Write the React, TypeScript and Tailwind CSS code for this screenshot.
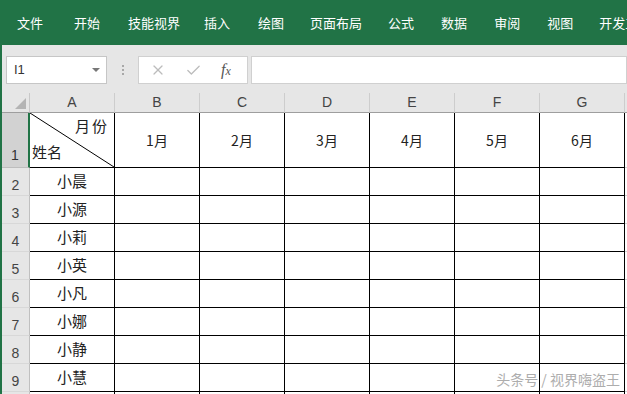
import React from "react";
import { X, Check } from "lucide-react";

const tabs: { label: string; cls: string }[] = [
  { label: "文件", cls: "ml-[17px]" },
  { label: "开始", cls: "ml-[31px]" },
  { label: "技能视界", cls: "ml-[28px]" },
  { label: "插入", cls: "ml-[24px]" },
  { label: "绘图", cls: "ml-[28px]" },
  { label: "页面布局", cls: "ml-[26px]" },
  { label: "公式", cls: "ml-[26px]" },
  { label: "数据", cls: "ml-[27px]" },
  { label: "审阅", cls: "ml-[27px]" },
  { label: "视图", cls: "ml-[27px]" },
  { label: "开发工", cls: "ml-[26px]" },
];

const cols = ["A", "B", "C", "D", "E", "F", "G"];
const names = ["小晨", "小源", "小莉", "小英", "小凡", "小娜", "小静", "小慧"];
const months = ["1月", "2月", "3月", "4月", "5月", "6月"];

const cjk = "font-['Noto_Sans_CJK_SC',sans-serif]";
const lat = "font-['Liberation_Sans','Noto_Sans_CJK_SC',sans-serif]";

export default function App() {
  return (
    <div className="relative w-[627px] h-[394px] overflow-hidden bg-white">
      {/* Ribbon */}
      <div className={`h-[45px] bg-[#217346] flex items-center whitespace-nowrap overflow-hidden text-white text-[13px] ${cjk}`}>
        {tabs.map((t) => (
          <span key={t.label} className={`${t.cls} shrink-0`}>
            {t.label}
          </span>
        ))}
      </div>

      <div className="border-l-2 border-[#217346]">
        {/* Formula bar */}
        <div className="h-[48px] bg-[#e6e6e6] flex items-start pt-[11px] pl-[4px]">
          <div className="w-[101px] h-[28px] bg-white border border-[#c6c6c6] flex items-center pl-[7px] pr-[6px]">
            <span className={`text-[13px] text-[#333] ${lat}`}>I1</span>
            <span className="ml-auto w-0 h-0 border-l-[4px] border-r-[4px] border-t-[4px] border-l-transparent border-r-transparent border-t-[#777]" />
          </div>
          <div className="w-[31px] h-[28px] flex flex-col items-center justify-center gap-[2px]">
            <span className="w-[2px] h-[2px] bg-[#a8a8a8]" />
            <span className="w-[2px] h-[2px] bg-[#a8a8a8]" />
            <span className="w-[2px] h-[2px] bg-[#a8a8a8]" />
          </div>
          <div className="w-[110px] h-[28px] bg-white border border-[#d0d0d0] flex items-center">
            <span className="ml-[11px] flex items-center">
              <X size={16} strokeWidth={1.8} color="#bcbcbc" />
            </span>
            <span className="ml-[19px] flex items-center">
              <Check size={17} strokeWidth={1.8} color="#bcbcbc" />
            </span>
            <span className="ml-[19px] italic text-[16px] text-[#555] font-['Liberation_Serif',serif] leading-none">
              f<span className="text-[12px]">x</span>
            </span>
          </div>
          <div className="ml-[3px] flex-1 h-[28px] bg-white border border-[#d0d0d0]" />
        </div>

        {/* Grid */}
        <div className="grid grid-cols-[28px_85px_85px_85px_85px_85px_85px_85px_1fr]">
          {/* Header row */}
          <div className="h-[20px] bg-[#e6e6e6] border-b border-[#9e9e9e] border-r border-r-[#c8c8c8] relative">
            <svg className="absolute right-[3px] bottom-[3px]" width="11" height="11" viewBox="0 0 11 11">
              <polygon points="11,0 11,11 0,11" fill="#b4b4b4" />
            </svg>
          </div>
          {cols.map((c) => (
            <div
              key={c}
              className={`h-[20px] bg-[#e6e6e6] border-b border-[#9e9e9e] border-r border-r-[#cdcdcd] flex items-center justify-center text-[14px] text-[#444] ${lat}`}
            >
              {c}
            </div>
          ))}
          <div className="h-[20px] bg-[#e6e6e6] border-b border-[#9e9e9e]" />

          {/* Row 1 */}
          <div className={`h-[55px] bg-[#d2d2d2] border-r-2 border-[#217346] border-b border-b-[#bdbdbd] flex items-end justify-center pb-[1px] text-[14px] text-[#333] ${lat}`}>
            1
          </div>
          <div className={`h-[55px] relative border-r border-b border-black text-[15px] text-[#222] ${cjk}`}>
            <svg className="absolute inset-0" width="84" height="54" viewBox="0 0 84 54" preserveAspectRatio="none">
              <line x1="0" y1="0" x2="84" y2="54" stroke="#000" strokeWidth="1" />
            </svg>
            <span className="absolute right-[5px] top-[5px] leading-none tracking-[2px]">月份</span>
            <span className="absolute left-[2px] top-[31px] leading-none">姓名</span>
          </div>
          {months.map((m) => (
            <div
              key={m}
              className={`h-[55px] border-r border-b border-black flex items-center justify-center text-[14px] text-[#222] ${cjk}`}
            >
              {m}
            </div>
          ))}
          <div className="h-[55px] border-b border-[#d4d4d4]" />

          {/* Rows 2-10 */}
          {[...names, ""].map((n, i) => (
            <React.Fragment key={i}>
              <div
                className={`h-[28px] bg-[#e6e6e6] border-r border-[#c0c0c0] border-b border-b-[#d8d8d8] flex items-end justify-center text-[14px] text-[#444] leading-[20px] ${lat}`}
              >
                {i < 8 ? i + 2 : ""}
              </div>
              <div
                className={`h-[28px] border-r border-b border-black flex items-center justify-center text-[15px] text-[#222] ${cjk}`}
              >
                {n}
              </div>
              {months.map((m) => (
                <div key={m} className="h-[28px] border-r border-b border-black" />
              ))}
              <div className="h-[28px] border-b border-[#d4d4d4]" />
            </React.Fragment>
          ))}
        </div>
      </div>

      {/* Watermark */}
      <div
        className={`absolute right-[7px] bottom-[4px] text-[14px] text-[#adadad] ${cjk} [text-shadow:0_0_2px_#fff,0_0_2px_#fff]`}
      >
        头条号 / 视界嗨盗王
      </div>
    </div>
  );
}
